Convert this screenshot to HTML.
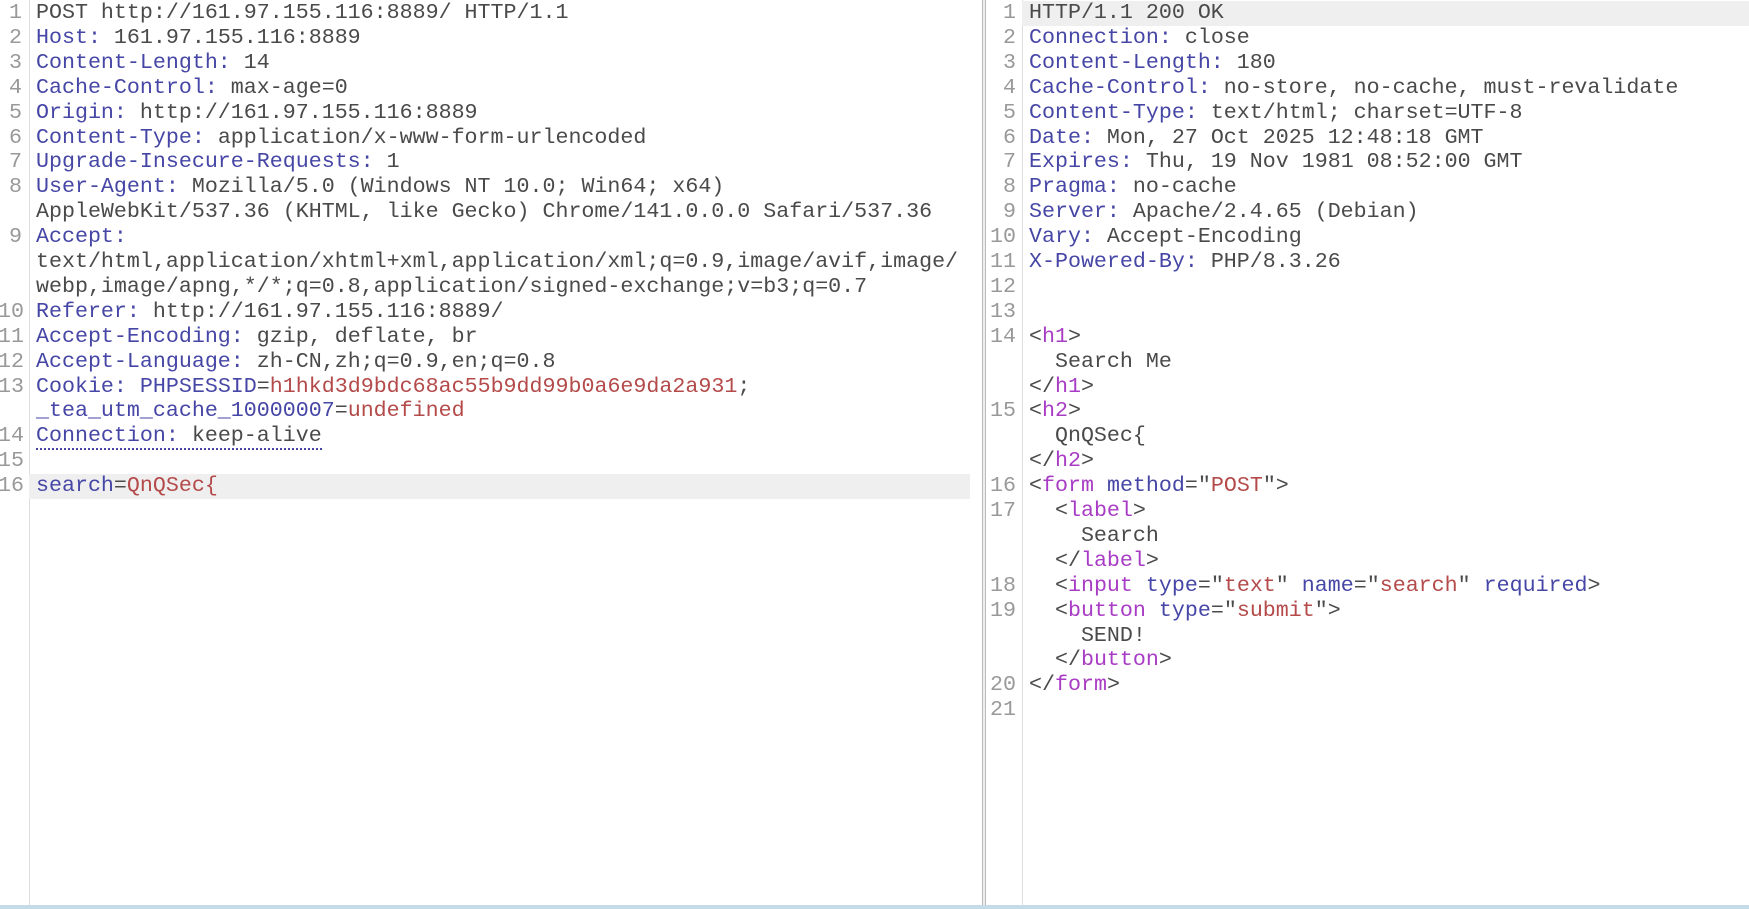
<!DOCTYPE html>
<html><head><meta charset="utf-8"><style>
body{margin:0;width:1749px;height:909px;background:#fff;overflow:hidden;position:relative;font-family:"Liberation Mono","Courier New",monospace;font-size:21.65px;color:#4a4a4a}
.r{position:absolute;height:24.9px;line-height:24.9px;white-space:pre}
.n{position:absolute;height:24.9px;line-height:24.9px;color:#999;text-align:right}
.k{color:#4646a6}.v{color:#b44a4a}.t{color:#a83cc4}
</style></head><body>
<div style="position:absolute;left:29px;top:0;width:1px;height:905px;background:#ddd"></div>
<div style="position:absolute;left:29px;top:474px;width:941px;height:25px;background:#efefef"></div>
<div style="position:absolute;left:982px;top:0;width:4px;height:905px;border-left:1px solid #bbb;border-right:1px solid #bbb;box-sizing:border-box;background:#eee"></div>
<div style="position:absolute;left:1022px;top:0;width:1px;height:905px;background:#ddd"></div>
<div style="position:absolute;left:1022px;top:1px;width:727px;height:25px;background:#efefef"></div>
<div style="position:absolute;left:0;top:905px;width:1749px;height:4px;background:#c6dbe8"></div>
<div id="L"></div><div id="R"></div>
<script>
function build(id,rows,nx,tx,nw){var h='';rows.forEach(function(r,i){var y=i*24.9+1;if(r[0])h+='<div class="n" style="left:'+nx+'px;width:'+nw+'px;top:'+y+'px">'+r[0]+'</div>';h+='<div class="r" style="left:'+tx+'px;top:'+y+'px">'+r[1]+'</div>';});document.getElementById(id).innerHTML=h;}
var K=function(s){return '<span class="k">'+s+'</span>'},V=function(s){return '<span class="v">'+s+'</span>'},T=function(s){return '<span class="t">'+s+'</span>'};
build('L',[
['1','POST http://161.97.155.116:8889/ HTTP/1.1'],
['2',K('Host:')+' 161.97.155.116:8889'],
['3',K('Content-Length:')+' 14'],
['4',K('Cache-Control:')+' max-age=0'],
['5',K('Origin:')+' http://161.97.155.116:8889'],
['6',K('Content-Type:')+' application/x-www-form-urlencoded'],
['7',K('Upgrade-Insecure-Requests:')+' 1'],
['8',K('User-Agent:')+' Mozilla/5.0 (Windows NT 10.0; Win64; x64)'],
['','AppleWebKit/537.36 (KHTML, like Gecko) Chrome/141.0.0.0 Safari/537.36'],
['9',K('Accept:')],
['','text/html,application/xhtml+xml,application/xml;q=0.9,image/avif,image/'],
['','webp,image/apng,*/*;q=0.8,application/signed-exchange;v=b3;q=0.7'],
['10',K('Referer:')+' http://161.97.155.116:8889/'],
['11',K('Accept-Encoding:')+' gzip, deflate, br'],
['12',K('Accept-Language:')+' zh-CN,zh;q=0.9,en;q=0.8'],
['13',K('Cookie:')+' '+K('PHPSESSID')+'='+V('h1hkd3d9bdc68ac55b9dd99b0a6e9da2a931')+';'],
['',K('_tea_utm_cache_10000007')+'='+V('undefined')],
['14','<span style="border-bottom:2px dotted #4646a6">'+K('Connection:')+' keep-alive</span>'],
['15',''],
['16',K('search')+'='+V('QnQSec{')]
],-2,36,24);
build('R',[
['1','HTTP/1.1 200 OK'],
['2',K('Connection:')+' close'],
['3',K('Content-Length:')+' 180'],
['4',K('Cache-Control:')+' no-store, no-cache, must-revalidate'],
['5',K('Content-Type:')+' text/html; charset=UTF-8'],
['6',K('Date:')+' Mon, 27 Oct 2025 12:48:18 GMT'],
['7',K('Expires:')+' Thu, 19 Nov 1981 08:52:00 GMT'],
['8',K('Pragma:')+' no-cache'],
['9',K('Server:')+' Apache/2.4.65 (Debian)'],
['10',K('Vary:')+' Accept-Encoding'],
['11',K('X-Powered-By:')+' PHP/8.3.26'],
['12',''],['13',''],
['14','&lt;'+T('h1')+'&gt;'],
['','  Search Me'],
['','&lt;/'+T('h1')+'&gt;'],
['15','&lt;'+T('h2')+'&gt;'],
['','  QnQSec{'],
['','&lt;/'+T('h2')+'&gt;'],
['16','&lt;'+T('form')+' '+K('method')+'="'+V('POST')+'"&gt;'],
['17','  &lt;'+T('label')+'&gt;'],
['','    Search'],
['','  &lt;/'+T('label')+'&gt;'],
['18','  &lt;'+T('input')+' '+K('type')+'="'+V('text')+'" '+K('name')+'="'+V('search')+'" '+K('required')+'&gt;'],
['19','  &lt;'+T('button')+' '+K('type')+'="'+V('submit')+'"&gt;'],
['','    SEND!'],
['','  &lt;/'+T('button')+'&gt;'],
['20','&lt;/'+T('form')+'&gt;'],
['21','']
],986,1029,30);
</script>
</body></html>
